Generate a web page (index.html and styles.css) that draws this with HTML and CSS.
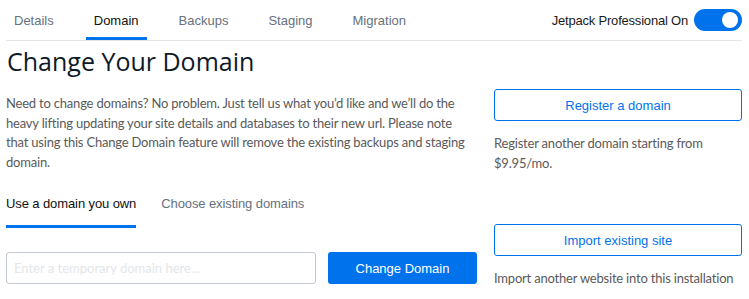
FILE: index.html
```html
<!DOCTYPE html>
<html lang="en">
<head>
    <meta charset="UTF-8">
    <meta name="viewport" content="width=device-width, initial-scale=1.0">
    <title>Change Your Domain</title>
    <link rel="stylesheet" href="styles.css">
</head>
<body>
    <div class="page">
        <nav class="site-tabs">
            <a class="site-tab" href="#">Details</a>
            <a class="site-tab active" href="#">Domain</a>
            <a class="site-tab" href="#">Backups</a>
            <a class="site-tab" href="#">Staging</a>
            <a class="site-tab" href="#">Migration</a>
            <div class="jetpack">
                <span>Jetpack Professional On</span>
                <span class="toggle"><span class="knob"></span></span>
            </div>
        </nav>

        <h1>Change Your Domain</h1>

        <div class="layout">
            <div class="main-col">
                <p class="intro">Need to change domains? No problem. Just tell us what you’d like and we’ll do the heavy lifting updating your site details and databases to their new url. Please note that using this Change Domain feature will remove the existing backups and staging domain.</p>

                <div class="sub-tabs">
                    <a class="sub-tab active" href="#">Use a domain you own</a>
                    <a class="sub-tab" href="#">Choose existing domains</a>
                </div>

                <form class="domain-form">
                    <input type="text" placeholder="Enter a temporary domain here...">
                    <button type="submit">Change Domain</button>
                </form>
            </div>

            <aside class="side-col">
                <div class="action">
                    <a class="outline-btn" href="#">Register a domain</a>
                    <p>Register another domain starting from $9.95/mo.</p>
                </div>
                <div class="action">
                    <a class="outline-btn" href="#">Import existing site</a>
                    <p>Import another website into this installation</p>
                </div>
            </aside>
        </div>
    </div>
</body>
</html>
```

FILE: styles.css
```css
body {
    margin: 0;
    font-family: Lato, 'Liberation Sans', Arial, sans-serif;
    color: #555;
    background: #fff;
}

a {
    text-decoration: none;
}

.page {
    padding: 0 7px 0 6px;
}

/* top tabs */
.site-tabs {
    display: flex;
    align-items: center;
    gap: 24px;
    height: 40px;
    border-bottom: 1px solid #e3e5e8;
}

.site-tab {
    display: flex;
    align-items: center;
    height: 100%;
    padding: 0 8px;
    box-sizing: border-box;
    border-bottom: 3px solid transparent;
    padding-top: 3px;
    font-family: 'Liberation Sans', Arial, sans-serif;
    font-size: 13px;
    color: #66717e;
}

.site-tab.active {
    color: #111;
    border-bottom-color: #0073ec;
}

.jetpack {
    margin-left: auto;
    display: flex;
    align-items: center;
    gap: 6px;
    font-family: 'Liberation Sans', Arial, sans-serif;
    font-size: 13px;
    letter-spacing: -0.2px;
    color: #1a1a1a;
}

.toggle {
    position: relative;
    width: 48px;
    height: 22px;
    border-radius: 11px;
    background: #0073ec;
}

.toggle .knob {
    position: absolute;
    top: 3px;
    right: 4px;
    width: 16px;
    height: 16px;
    border-radius: 50%;
    background: #fff;
}

h1 {
    margin: 0 0 0 1px;
    font-family: 'Open Sans', sans-serif;
    font-weight: 400;
    font-size: 25px;
    line-height: 40px;
    color: #0e1a28;
}

.layout {
    display: grid;
    grid-template-columns: 1fr 248px;
    gap: 17px;
}

.intro {
    margin: 13px 0 0;
    font-size: 13px;
    line-height: 19.5px;
    letter-spacing: -0.2px;
    color: #5a5a5a;
}

/* sub tabs */
.sub-tabs {
    display: flex;
    gap: 25px;
    margin-top: 20px;
}

.sub-tab {
    padding: 4px 0 14px;
    border-bottom: 3px solid transparent;
    font-family: 'Liberation Sans', Arial, sans-serif;
    font-size: 13px;
    letter-spacing: -0.1px;
    color: #66717e;
}

.sub-tab.active {
    color: #111;
    border-bottom-color: #0073ec;
}

.domain-form {
    display: flex;
    gap: 12px;
    margin-top: 24px;
}

.domain-form input {
    flex: 1;
    height: 32px;
    box-sizing: border-box;
    padding: 0 7px;
    border: 1px solid #c3cad2;
    border-radius: 3px;
    font-family: Lato, sans-serif;
    font-size: 13px;
}

.domain-form input::placeholder {
    color: #e3e6ea;
}

.domain-form button {
    width: 149px;
    height: 32px;
    border: none;
    border-radius: 3px;
    background: #0073ec;
    color: #fff;
    font-family: 'Liberation Sans', Arial, sans-serif;
    font-size: 13px;
}

/* side column */
.side-col {
    padding-top: 8px;
}

.action {
    margin-bottom: 51px;
}

.outline-btn {
    display: flex;
    align-items: center;
    justify-content: center;
    height: 32px;
    box-sizing: border-box;
    border: 1px solid #0073ec;
    border-radius: 3px;
    color: #0073ec;
    font-family: 'Liberation Sans', Arial, sans-serif;
    font-size: 13px;
}

.action p {
    margin: 13px 0 0;
    font-size: 13px;
    line-height: 19.5px;
    letter-spacing: -0.2px;
    color: #5a5a5a;
}
```
